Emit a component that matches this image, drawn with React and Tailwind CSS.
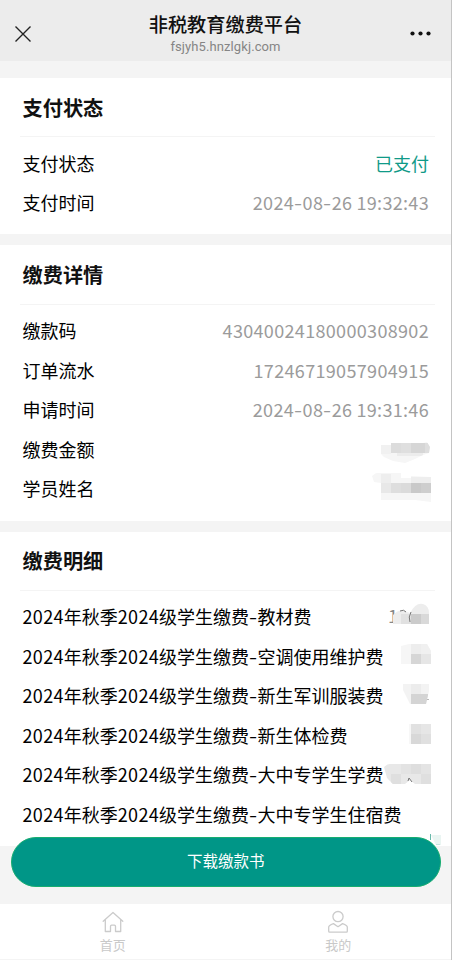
import React from 'react';

const paymentStatus = [
  { label: '支付状态', value: '已支付', paid: true },
  { label: '支付时间', value: '2024-08-26 19:32:43' }
];

// Masked values: each block is [x, y, width, height, color], top is the offset in the row
const paymentDetails = [
  { label: '缴款码', value: '43040024180000308902' },
  { label: '订单流水', value: '17246719057904915' },
  { label: '申请时间', value: '2024-08-26 19:31:46' },
  {
    label: '缴费金额',
    mask: {
      top: 1,
      shape: 'M2 15h10V13h32l4-1 3 5-1 6-6 2-8 4-10 4-12-2-9-4-3-3z',
      blocks: [
        [0, 12, 72, 22, '#f6f6f6'],
        [2, 15, 10, 9, '#f1f1f1'],
        [12, 13, 10, 10, '#dcdcdc'],
        [22, 13, 10, 10, '#dfdfdf'],
        [32, 13, 14, 10, '#d6d6d6'],
        [46, 13, 5, 10, '#dedede'],
        [18, 23, 26, 3, '#ececec']
      ]
    }
  },
  {
    label: '学员姓名',
    mask: {
      top: 4.4,
      shape: 'M-7 3q4-4 8-3h21v5h10v-2l20 1v25l-16-2H2V10l-7-1z',
      blocks: [
        [-8, 0, 72, 30, '#f6f6f6'],
        [2, 1, 10, 9, '#eeeeee'],
        [2, 10, 10, 10, '#e8e8e8'],
        [12, 10, 10, 10, '#dedede'],
        [22, 10, 10, 10, '#dbdbdb'],
        [32, 10, 10, 10, '#c9c9c9'],
        [42, 10, 10, 10, '#cecece'],
        [32, 4, 20, 6, '#eeeeee']
      ]
    }
  }
];

const feeItems = [
  {
    label: '2024年秋季2024级学生缴费-教材费',
    leading: '1',
    mask: {
      top: 1.6,
      shape: 'M14 26V17q7-7 14-3l3 1q6-11 13-9 6 2 6 9v11z',
      blocks: [
        [12, 4, 40, 24, '#ededed'],
        [22, 16, 10, 10, '#e1e1e1'],
        [32, 16, 10, 10, '#cbcbcb'],
        [42, 16, 8, 10, '#d9d9d9']
      ],
      strokes: ['M21 13q4-2 6 1', 'M32 14q-3 5-1 10']
    }
  },
  {
    label: '2024年秋季2024级学生缴费-空调使用维护费',
    mask: {
      top: 2,
      shape: 'M22 8l8-2h18l4 7v13H22z',
      blocks: [
        [20, 6, 34, 20, '#f6f6f6'],
        [32, 6, 10, 10, '#ededed'],
        [42, 6, 10, 10, '#f0f0f0'],
        [32, 16, 10, 10, '#d6d6d6'],
        [42, 16, 10, 10, '#e6e6e6']
      ]
    }
  },
  {
    label: '2024年秋季2024级学生缴费-新生军训服装费',
    mask: {
      top: 2.4,
      shape: 'M24 6h26v7l-3 13H31l-7-14z',
      blocks: [
        [20, 6, 34, 20, '#f3f3f3'],
        [32, 6, 10, 10, '#ececec'],
        [32, 16, 17, 10, '#d4d4d4']
      ],
      strokes: ['M49 21v1']
    }
  },
  {
    label: '2024年秋季2024级学生缴费-新生体检费',
    mask: {
      top: 2.8,
      shape: 'M30 6h22v20H30z',
      blocks: [
        [28, 5, 5, 21, '#f7f7f7'],
        [32, 6, 10, 10, '#e1e1e1'],
        [42, 6, 10, 10, '#e6e6e6'],
        [32, 16, 10, 10, '#d8d8d8'],
        [42, 16, 10, 10, '#e0e0e0']
      ]
    }
  },
  {
    label: '2024年秋季2024级学生缴费-大中专学生学费',
    mask: {
      top: 3.2,
      shape: 'M5 9q4-4 9-3h38v20H36l-5-4-5 4H14L8 20z',
      blocks: [
        [4, 6, 50, 20, '#e8e8e8'],
        [12, 16, 10, 10, '#dfdfdf'],
        [22, 6, 10, 10, '#e3e3e3'],
        [32, 6, 10, 10, '#dedede'],
        [42, 6, 10, 10, '#e4e4e4'],
        [42, 16, 10, 10, '#dfdfdf']
      ],
      strokes: ['M29 23l1-3 3 4']
    }
  },
  { label: '2024年秋季2024级学生缴费-大中专学生住宿费' }
];

// Digits and hyphens have their own spacing next to Chinese characters
const MixedText = ({ text }) =>
  text.split(/(-|[\d:]+)/).filter(Boolean).map((part, index) => {
    if (part === '-') {
      return (
        <span key={index} className="inline-block w-[8.5px] text-center">
          <span className="inline-block scale-x-[1.3]">-</span>
        </span>
      );
    }
    return (
      <span key={index} className={/\d/.test(part) ? 'tracking-[0.33px]' : ''}>
        {part}
      </span>
    );
  });

const Mask = ({ id, mask }) => (
  <svg
    className="absolute right-[-51px] h-10 w-[101px] overflow-visible"
    style={{ top: mask.top }}
    viewBox="0 0 101 40"
    shapeRendering="crispEdges"
  >
    <clipPath id={id}>
      <path d={mask.shape} />
    </clipPath>
    <g clipPath={`url(#${id})`}>
      {mask.blocks.map(([x, y, width, height, fill], index) => (
        <rect key={index} x={x} y={y} width={width} height={height} fill={fill} />
      ))}
    </g>
    {(mask.strokes || []).map(d => (
      <path key={d} d={d} fill="none" stroke="#777" strokeWidth="1" shapeRendering="auto" />
    ))}
  </svg>
);

const Row = ({ id, item }) => (
  <div className="relative flex h-[39.6px] items-center justify-between whitespace-nowrap pl-[22.5px] pr-[22px] text-[18px] leading-none">
    <span className="text-black"><MixedText text={item.label} /></span>
    {item.value && (
      <span className={item.paid ? 'text-[#109a88]' : 'text-[#9b9b9b]'}>
        <MixedText text={item.value} />
      </span>
    )}
    {item.mask && (
      <span className="relative h-[39.6px] w-[42px] shrink-0">
        {item.leading && <span className="absolute left-px top-[10px] text-[#888]">{item.leading}</span>}
        <Mask id={id} mask={item.mask} />
      </span>
    )}
  </div>
);

const Section = ({ title, name, items }) => (
  <section className="bg-white pb-[12.4px]">
    <h2 className="ml-5 mr-4 flex h-[59.4px] items-center border-b border-[#f4f4f4] pl-[2.5px] pt-[1.5px] text-[20.2px] font-bold leading-none text-[#111]">
      {title}
    </h2>
    <div className="pt-[5.4px]">
      {items.map((item, index) => (
        <Row key={item.label} id={`${name}-${index}`} item={item} />
      ))}
    </div>
  </section>
);

const HomeIcon = () => (
  <svg className="h-6 w-6" viewBox="0 0 24 24" fill="none" stroke="#cbcbcb" strokeWidth="1.3" strokeLinejoin="round" strokeLinecap="round">
    <path d="M2.2 11.2 12 2.5l9.800 8.7M4.3 9.6v11.9h5.2v-5.2q0-1.1 1.1-1.1h2.8q1.1 0 1.1 1.1v5.2h5.2V9.6" />
  </svg>
);

const UserIcon = () => (
  <svg className="h-6 w-6" viewBox="0 0 24 24" fill="none" stroke="#cbcbcb" strokeWidth="1.3" strokeLinejoin="round">
    <circle cx="12" cy="6.6" r="5.1" />
    <path d="M2.7 21.2v-4.1q0-1.800 4.7-3.5l4.6 3.1 4.6-3.1q4.7 1.7 4.7 3.5v4.1q0 .9-.9.9H3.6q-.9 0-.9-.9z" />
  </svg>
);

const App = () => {
  return (
    <div className="flex h-[960px] w-[452px] flex-col overflow-hidden border-r border-[#c4c4c4] bg-[#f4f4f4] font-['Noto_Sans_CJK_SC',sans-serif]">
      {/* Browser header */}
      <header className="flex h-[61px] shrink-0 items-center bg-[#ececec] pl-[15px] pr-[20px]">
        <div className="w-[21px]">
          <svg className="mt-[6px] h-4 w-4" viewBox="0 0 16 16" stroke="#222" strokeWidth="1.4">
            <path d="M.5.5l15 15M15.5.5l-15 15" />
          </svg>
        </div>
        <div className="flex flex-1 flex-col items-center pl-[5px] pt-[5px]">
          <h1 className="text-[19.2px] font-medium leading-[26px] text-[#111]">非税教育缴费平台</h1>
          <p className="font-['Roboto',sans-serif] text-[13px] leading-[19px] tracking-[0.1px] text-[#858585]">fsjyh5.hnzlgkj.com</p>
        </div>
        <svg className="mt-[6px] h-[5px] w-[21px]" viewBox="0 0 21 5" fill="#111">
          <circle cx="2.5" cy="2.5" r="2.1" />
          <circle cx="10.5" cy="2.5" r="2.1" />
          <circle cx="18.5" cy="2.5" r="2.1" />
        </svg>
      </header>

      <main className="relative flex h-[843px] shrink-0 flex-col gap-[11px] pt-[17px]">
        <Section title="支付状态" name="status" items={paymentStatus} />
        <Section title="缴费详情" name="details" items={paymentDetails} />
        <Section title="缴费明细" name="fees" items={feeItems} />

        {/* Remainder of the last masked amount */}
        <svg className="absolute bottom-[58px] right-[10px] h-3 w-3" viewBox="0 0 12 12">
          <path d="M2 1h10v10H7z" fill="#eaf5f2" />
          <path d="M1.5 0v6" stroke="#69b9aa" strokeWidth="1" />
          <path d="M7 10.5h4" stroke="#c5e4de" />
        </svg>
        <button className="absolute bottom-[17px] left-[11px] right-[10.5px] h-[50px] rounded-full border border-[#18ad70] bg-[#009687] pb-[2px] text-[15.5px] leading-none text-white">
          下载缴款书
        </button>
      </main>

      {/* Tab bar */}
      <nav className="flex h-[55px] shrink-0 bg-white text-[13px] leading-none text-[#c9c9c9]">
        <div className="flex flex-1 flex-col items-center gap-[4px] pt-[6px]">
          <HomeIcon />
          <span>首页</span>
        </div>
        <div className="flex flex-1 flex-col items-center gap-[4px] pt-[6px]">
          <UserIcon />
          <span>我的</span>
        </div>
      </nav>
    </div>
  );
};

export default App;
